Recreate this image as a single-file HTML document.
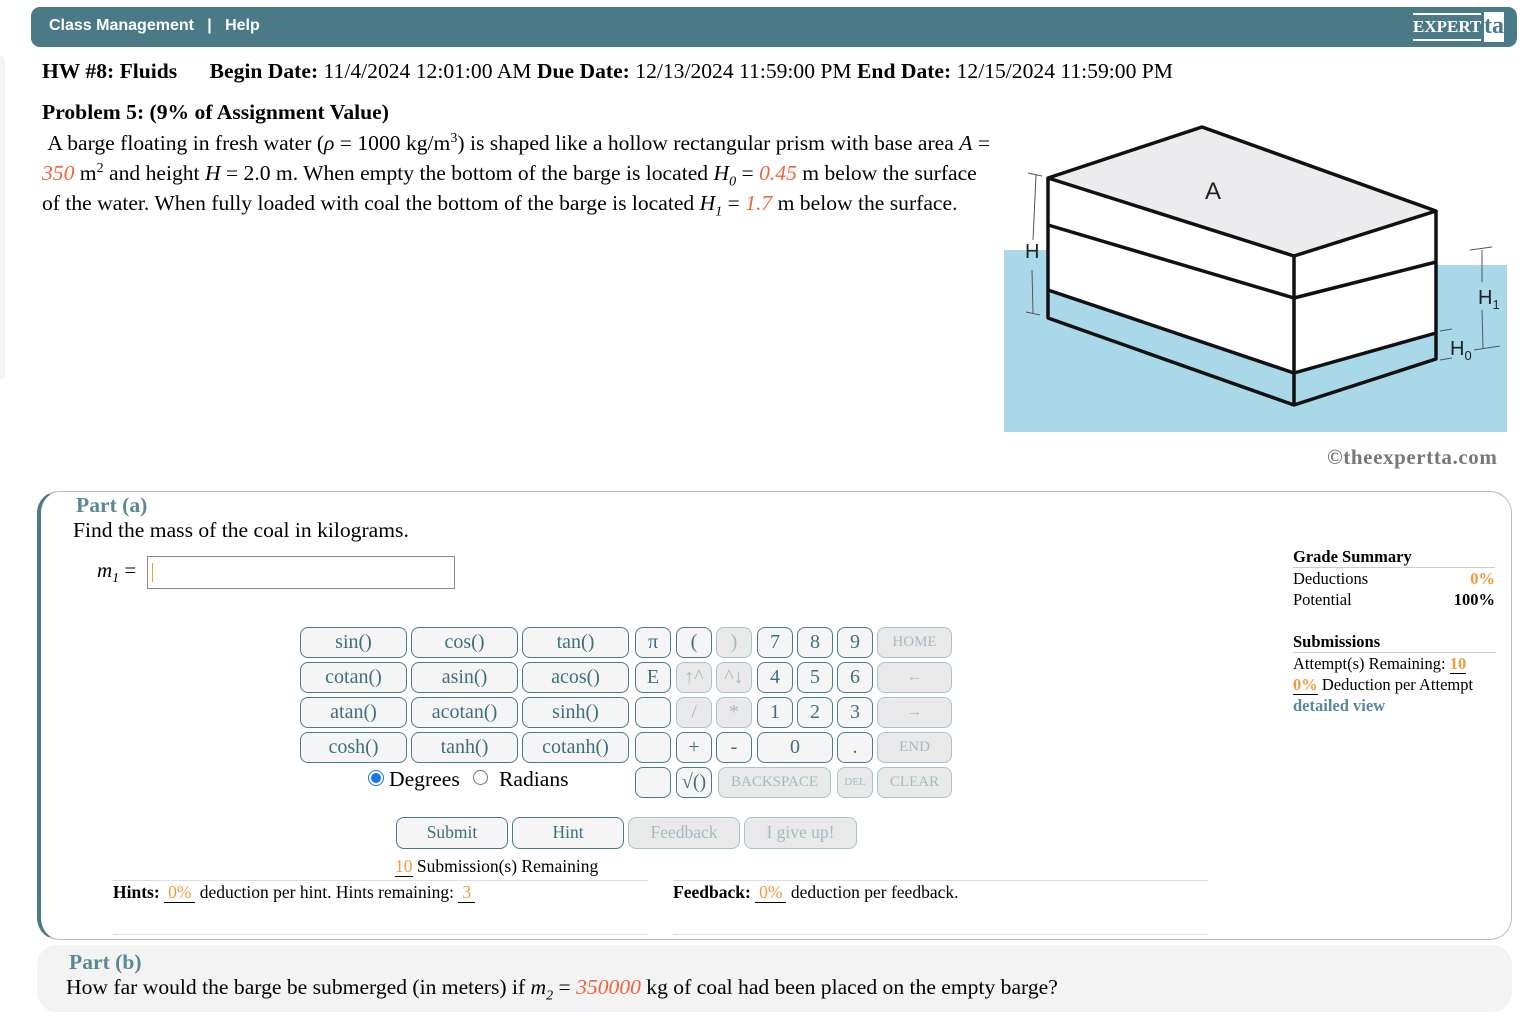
<!DOCTYPE html>
<html><head><meta charset="utf-8"><style>
*{box-sizing:border-box}
body{margin:0;width:1536px;height:1018px;position:relative;background:#fff;font-family:"Liberation Serif",serif;color:#000;overflow:hidden}
.a{position:absolute;white-space:nowrap}
.bar{left:31px;top:7px;width:1486px;height:40px;background:#4b7a87;border-radius:9px}
.nav{left:49px;top:17px;font-family:"Liberation Sans",sans-serif;font-weight:bold;font-size:16px;color:#fff}
.o{color:#f0643c;font-style:italic}
.or{color:#f39a3c}
.b{position:absolute;height:31px;border:1px solid #4b7a87;border-radius:8px;background:#f5f5f5;color:#3d6f7d;font-size:20px;text-align:center;line-height:28px;font-family:"Liberation Serif",serif}
.b.d{background:#e9e9e9;border-color:#a9c1c9;color:#a6bac1;font-size:15px}
.b.d2,.s.d2{background:#e9e9e9;border-color:#a9c1c9;color:#a6bac1}
.s{position:absolute;height:32px;top:817px;border:1px solid #4b7a87;border-radius:8px;background:#f5f5f5;color:#3d6f7d;font-size:17.5px;text-align:center;line-height:29px}
.u{border-bottom:1px solid #000;padding:0 4px}
</style></head><body>
<div class="a" style="left:0;top:55px;width:5px;height:325px;background:#f3f3f3;border-radius:0 6px 6px 0"></div>
<div class="a bar"></div>
<div class="a nav">Class Management &nbsp;&nbsp;|&nbsp;&nbsp; Help</div>
<div class="a" style="left:1413px;top:13px;width:68px;height:28px;border-top:2px solid #fff;border-bottom:2px solid #fff;color:#fff;font-weight:bold;font-size:17px;line-height:24px">EXPERT</div>
<div class="a" style="left:1484px;top:12px;width:20px;height:30px;background:#fff;color:#4b7a87;font-size:24px;font-weight:bold;line-height:28px;text-align:center">ta</div>

<div class="a" style="left:42px;top:59px;font-size:21.6px"><b>HW #8: Fluids</b>&nbsp;&nbsp;&nbsp;&nbsp;&nbsp; <b>Begin Date:</b> 11/4/2024 12:01:00 AM <b>Due Date:</b> 12/13/2024 11:59:00 PM <b>End Date:</b> 12/15/2024 11:59:00 PM</div>
<div class="a" style="left:42px;top:100px;font-size:21.6px"><b>Problem 5: (9% of Assignment Value)</b></div>
<div class="a" style="left:42px;top:128px;font-size:21.6px;line-height:30px">&nbsp;A barge floating in fresh water (<i>ρ</i> = 1000 kg/m<sup style="font-size:14px;line-height:0">3</sup>) is shaped like a hollow rectangular prism with base area <i>A</i> =<br><span class="o">350</span> m<sup style="font-size:14px;line-height:0">2</sup> and height <i>H</i> = 2.0 m. When empty the bottom of the barge is located <i>H<sub style="font-size:14px;line-height:0">0</sub></i> = <span class="o">0.45</span> m below the surface<br>of the water. When fully loaded with coal the bottom of the barge is located <i>H<sub style="font-size:14px;line-height:0">1</sub></i> = <span class="o">1.7</span> m below the surface.</div>

<svg class="a" style="left:0;top:0" width="1536" height="470">
<rect x="1004" y="250" width="44" height="182" fill="#a9d8e8"/>
<rect x="1004" y="265" width="503" height="167" fill="#a9d8e8"/>
<polygon points="1048,178 1294,256 1294,373 1048,290" fill="#fff"/>
<polygon points="1294,256 1436,211 1436,333 1294,373" fill="#fff"/>
<polygon points="1048,178 1202,127 1436,211 1294,256" fill="#ececee"/>
<g stroke="#111" stroke-width="3.5" fill="none" stroke-linejoin="round">
<polygon points="1048,178 1202,127 1436,211 1294,256"/>
<polyline points="1048,178 1048,318 1294,405 1436,359 1436,211"/>
<line x1="1294" y1="256" x2="1294" y2="405"/>
<polyline points="1048,225 1294,298 1436,262"/>
<polyline points="1048,290 1294,373 1436,333"/>
</g>
<g stroke="#555" stroke-width="1" fill="none">
<line x1="1036" y1="175" x2="1033" y2="240"/><line x1="1028" y1="173" x2="1042" y2="176"/>
<line x1="1032" y1="270" x2="1033" y2="313"/><line x1="1026" y1="312" x2="1040" y2="315"/>
<line x1="1482" y1="250" x2="1482" y2="282"/><line x1="1470" y1="250" x2="1492" y2="247"/>
<line x1="1482" y1="310" x2="1483" y2="348"/><line x1="1474" y1="350" x2="1500" y2="346"/>
<line x1="1440" y1="331" x2="1452" y2="329"/><line x1="1440" y1="360" x2="1452" y2="358"/>
</g>
<text x="1205" y="199" font-family="Liberation Sans" font-size="24" fill="#222">A</text>
<text x="1025" y="258" font-family="Liberation Sans" font-size="20" fill="#222">H</text>
<text x="1478" y="304" font-family="Liberation Sans" font-size="20" fill="#222">H<tspan font-size="13" dy="5">1</tspan></text>
<text x="1450" y="355" font-family="Liberation Sans" font-size="20" fill="#222">H<tspan font-size="13" dy="5">0</tspan></text>
<text x="1327" y="464" font-family="Liberation Serif" font-size="21" font-weight="bold" fill="#777" letter-spacing="0.6">©theexpertta.com</text>
</svg>

<div class="a" style="left:37px;top:491px;width:1475px;height:449px;border:1px solid #bbb;border-left:4px solid #4b7a87;border-radius:22px"></div>
<div class="a" style="left:76px;top:493px;font-size:21.6px;font-weight:bold;color:#5a8896">Part (a)</div>
<div class="a" style="left:73px;top:518px;font-size:21.6px">Find the mass of the coal in kilograms.</div>
<div class="a" style="left:97px;top:558px;font-size:21px"><i>m<sub style="font-size:14px">1</sub></i> =</div>
<div class="a" style="left:147px;top:556px;width:308px;height:33px;border:1px solid #888"></div>
<div class="a" style="left:152px;top:563px;width:1px;height:19px;background:#f39a3c"></div>

<div class="a" style="left:1293px;top:546px;width:202px;font-size:16.5px;line-height:21px">
<div style="font-weight:bold;border-bottom:1px solid #ccc">Grade Summary</div>
<div>Deductions<span class="or" style="float:right;font-weight:bold">0%</span></div>
<div>Potential<span style="float:right;font-weight:bold">100%</span></div>
<div style="height:21px"></div>
<div style="font-weight:bold;border-bottom:1px solid #ccc">Submissions</div>
<div>Attempt(s) Remaining: <span class="or" style="font-weight:bold;border-bottom:1px solid #000">10</span></div>
<div><span class="or" style="font-weight:bold;border-bottom:1px solid #000">0%</span> Deduction per Attempt</div>
<div style="color:#5a8896;font-weight:bold">detailed view</div>
</div>

<div class="b" style="left:300px;top:627px;width:107px">sin()</div>
<div class="b" style="left:411px;top:627px;width:107px">cos()</div>
<div class="b" style="left:522px;top:627px;width:107px">tan()</div>
<div class="b" style="left:635px;top:627px;width:36px">π</div>
<div class="b" style="left:676px;top:627px;width:36px">(</div>
<div class="b d2" style="left:716px;top:627px;width:36px">)</div>
<div class="b" style="left:757px;top:627px;width:36px">7</div>
<div class="b" style="left:797px;top:627px;width:36px">8</div>
<div class="b" style="left:837px;top:627px;width:36px">9</div>
<div class="b d" style="left:877px;top:627px;width:75px">HOME</div>

<div class="b" style="left:300px;top:662px;width:107px">cotan()</div>
<div class="b" style="left:411px;top:662px;width:107px">asin()</div>
<div class="b" style="left:522px;top:662px;width:107px">acos()</div>
<div class="b" style="left:635px;top:662px;width:36px">E</div>
<div class="b d2" style="left:676px;top:662px;width:36px">↑^</div>
<div class="b d2" style="left:716px;top:662px;width:36px">^↓</div>
<div class="b" style="left:757px;top:662px;width:36px">4</div>
<div class="b" style="left:797px;top:662px;width:36px">5</div>
<div class="b" style="left:837px;top:662px;width:36px">6</div>
<div class="b d" style="left:877px;top:662px;width:75px">←</div>

<div class="b" style="left:300px;top:697px;width:107px">atan()</div>
<div class="b" style="left:411px;top:697px;width:107px">acotan()</div>
<div class="b" style="left:522px;top:697px;width:107px">sinh()</div>
<div class="b" style="left:635px;top:697px;width:36px"></div>
<div class="b d2" style="left:676px;top:697px;width:36px">/</div>
<div class="b d2" style="left:716px;top:697px;width:36px">*</div>
<div class="b" style="left:757px;top:697px;width:36px">1</div>
<div class="b" style="left:797px;top:697px;width:36px">2</div>
<div class="b" style="left:837px;top:697px;width:36px">3</div>
<div class="b d" style="left:877px;top:697px;width:75px">→</div>

<div class="b" style="left:300px;top:732px;width:107px">cosh()</div>
<div class="b" style="left:411px;top:732px;width:107px">tanh()</div>
<div class="b" style="left:522px;top:732px;width:107px">cotanh()</div>
<div class="b" style="left:635px;top:732px;width:36px"></div>
<div class="b" style="left:676px;top:732px;width:36px">+</div>
<div class="b" style="left:716px;top:732px;width:36px">-</div>
<div class="b" style="left:757px;top:732px;width:76px">0</div>
<div class="b" style="left:837px;top:732px;width:36px">.</div>
<div class="b d" style="left:877px;top:732px;width:75px">END</div>

<div class="b" style="left:635px;top:767px;width:36px"></div>
<div class="b" style="left:676px;top:767px;width:36px">√()</div>
<div class="b d" style="left:718px;top:767px;width:113px">BACKSPACE</div>
<div class="b d" style="left:837px;top:767px;width:36px;font-size:11px">DEL</div>
<div class="b d" style="left:877px;top:767px;width:75px">CLEAR</div>

<div class="a" style="left:368px;top:770px;width:16px;height:16px;border-radius:50%;border:1px solid #1a73e8;background:#fff"><div style="margin:2px;width:10px;height:10px;border-radius:50%;background:#1a73e8"></div></div>
<div class="a" style="left:389px;top:767px;font-size:21.6px">Degrees</div>
<div class="a" style="left:473px;top:770px;width:15px;height:15px;border-radius:50%;border:1px solid #777"></div>
<div class="a" style="left:499px;top:767px;font-size:21.6px">Radians</div>

<div class="s" style="left:396px;width:112px">Submit</div>
<div class="s" style="left:512px;width:112px">Hint</div>
<div class="s d2" style="left:628px;width:112px">Feedback</div>
<div class="s d2" style="left:744px;width:113px">I give up!</div>

<div class="a" style="left:395px;top:856px;font-size:17.5px"><span class="or" style="border-bottom:1px solid #000">10</span> Submission(s) Remaining</div>
<div class="a" style="left:113px;top:880px;width:535px;height:55px;border-top:1px solid #ddd;border-bottom:1px solid #ddd"></div>
<div class="a" style="left:673px;top:880px;width:535px;height:55px;border-top:1px solid #ddd;border-bottom:1px solid #ddd"></div>
<div class="a" style="left:113px;top:882px;font-size:17.5px"><b>Hints:</b> <span class="or u">0%</span> deduction per hint. Hints remaining: <span class="or u">3</span></div>
<div class="a" style="left:673px;top:882px;font-size:17.5px"><b>Feedback:</b> <span class="or u">0%</span> deduction per feedback.</div>

<div class="a" style="left:37px;top:945px;width:1475px;height:67px;background:#f3f3f3;border-radius:20px"></div>
<div class="a" style="left:69px;top:950px;font-size:21.6px;font-weight:bold;color:#5a8896">Part (b)</div>
<div class="a" style="left:66px;top:975px;font-size:21.6px">How far would the barge be submerged (in meters) if <i>m<sub style="font-size:14px">2</sub></i> = <span class="o">350000</span> kg of coal had been placed on the empty barge?</div>
</body></html>
